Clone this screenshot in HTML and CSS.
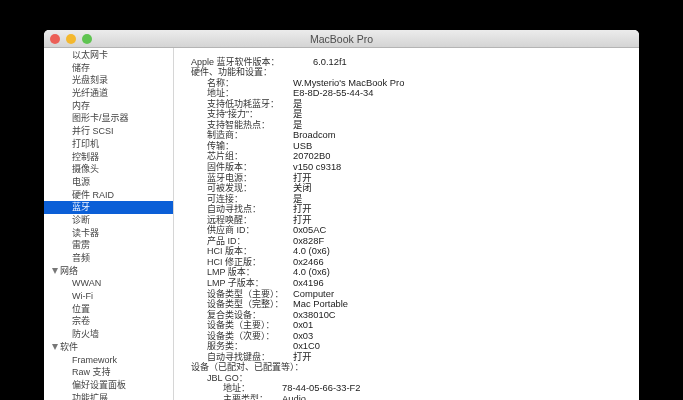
FILE: index.html
```html
<!DOCTYPE html>
<html lang="zh-CN">
  <head>
    <meta charset="UTF-8" />
    <meta name="viewport" content="width=device-width, initial-scale=1.0" />
    <title>MacBook Pro</title>
    <link rel="stylesheet" href="styles.css">
  </head>
  <body>
    <div class="window">
      <div class="titlebar">
        <div class="lights">
          <span class="light red"></span>
          <span class="light yellow"></span>
          <span class="light green"></span>
        </div>
        <div class="title">MacBook Pro</div>
      </div>
      <div class="content">
        <ul class="sidebar">
          <li>以太网卡</li>
          <li>储存</li>
          <li>光盘刻录</li>
          <li>光纤通道</li>
          <li>内存</li>
          <li>图形卡/显示器</li>
          <li>并行 SCSI</li>
          <li>打印机</li>
          <li>控制器</li>
          <li>摄像头</li>
          <li>电源</li>
          <li>硬件 RAID</li>
          <li class="selected">蓝牙</li>
          <li>诊断</li>
          <li>读卡器</li>
          <li>雷雳</li>
          <li>音频</li>
          <li class="group"><span class="arrow"></span>网络</li>
          <li>WWAN</li>
          <li>Wi-Fi</li>
          <li>位置</li>
          <li>宗卷</li>
          <li>防火墙</li>
          <li class="group"><span class="arrow"></span>软件</li>
          <li>Framework</li>
          <li>Raw 支持</li>
          <li>偏好设置面板</li>
          <li>功能扩展</li>
        </ul>
        <div class="details">
          <div class="row top"><span class="key">Apple 蓝牙软件版本：</span><span class="val">6.0.12f1</span></div>
          <div class="row"><span class="key">硬件、功能和设置：</span></div>
          <div class="row sub"><span class="key">名称：</span><span class="val">W.Mysterio's MacBook Pro</span></div>
          <div class="row sub"><span class="key">地址：</span><span class="val">E8-8D-28-55-44-34</span></div>
          <div class="row sub"><span class="key">支持低功耗蓝牙：</span><span class="val">是</span></div>
          <div class="row sub"><span class="key">支持“接力”：</span><span class="val">是</span></div>
          <div class="row sub"><span class="key">支持智能热点：</span><span class="val">是</span></div>
          <div class="row sub"><span class="key">制造商：</span><span class="val">Broadcom</span></div>
          <div class="row sub"><span class="key">传输：</span><span class="val">USB</span></div>
          <div class="row sub"><span class="key">芯片组：</span><span class="val">20702B0</span></div>
          <div class="row sub"><span class="key">固件版本：</span><span class="val">v150 c9318</span></div>
          <div class="row sub"><span class="key">蓝牙电源：</span><span class="val">打开</span></div>
          <div class="row sub"><span class="key">可被发现：</span><span class="val">关闭</span></div>
          <div class="row sub"><span class="key">可连接：</span><span class="val">是</span></div>
          <div class="row sub"><span class="key">自动寻找点：</span><span class="val">打开</span></div>
          <div class="row sub"><span class="key">远程唤醒：</span><span class="val">打开</span></div>
          <div class="row sub"><span class="key">供应商 ID：</span><span class="val">0x05AC</span></div>
          <div class="row sub"><span class="key">产品 ID：</span><span class="val">0x828F</span></div>
          <div class="row sub"><span class="key">HCI 版本：</span><span class="val">4.0 (0x6)</span></div>
          <div class="row sub"><span class="key">HCI 修正版：</span><span class="val">0x2466</span></div>
          <div class="row sub"><span class="key">LMP 版本：</span><span class="val">4.0 (0x6)</span></div>
          <div class="row sub"><span class="key">LMP 子版本：</span><span class="val">0x4196</span></div>
          <div class="row sub"><span class="key">设备类型（主要）：</span><span class="val">Computer</span></div>
          <div class="row sub"><span class="key">设备类型（完整）：</span><span class="val">Mac Portable</span></div>
          <div class="row sub"><span class="key">复合类设备：</span><span class="val">0x38010C</span></div>
          <div class="row sub"><span class="key">设备类（主要）：</span><span class="val">0x01</span></div>
          <div class="row sub"><span class="key">设备类（次要）：</span><span class="val">0x03</span></div>
          <div class="row sub"><span class="key">服务类：</span><span class="val">0x1C0</span></div>
          <div class="row sub"><span class="key">自动寻找键盘：</span><span class="val">打开</span></div>
          <div class="row"><span class="key">设备（已配对、已配置等）：</span></div>
          <div class="row sub"><span class="key">JBL GO：</span></div>
          <div class="row device"><span class="key">地址：</span><span class="val">78-44-05-66-33-F2</span></div>
          <div class="row device"><span class="key">主要类型：</span><span class="val">Audio</span></div>
        </div>
      </div>
    </div>
  </body>
</html>
```

FILE: styles.css
```css
html,
body {
  height: 100%;
  margin: 0;
  overflow: hidden;
}

body {
  background-color: #000;
  padding: 30px 0 0 44px;
  box-sizing: border-box;
  font-family: "Liberation Sans", "Noto Sans CJK SC", sans-serif;
  font-size: 9px;
  color: #222;
}

.window {
  width: 595px;
  height: 370px;
  background-color: #fff;
  border-radius: 5px 5px 0 0;
  overflow: hidden;
  filter: blur(0.3px);
}

.titlebar {
  display: flex;
  align-items: center;
  justify-content: center;
  position: relative;
  height: 17px;
  background: linear-gradient(#ececec, #d4d4d4);
  border-bottom: 1px solid #b4b4b4;
}

.lights {
  position: absolute;
  top: 4px;
  left: 6px;
  display: flex;
  gap: 6px;
}

.light {
  width: 10px;
  height: 10px;
  border-radius: 50%;
}

.red {
  background-color: #ec5f57;
}

.yellow {
  background-color: #f4b82e;
}

.green {
  background-color: #5fc451;
}

.title {
  font-size: 10.5px;
  color: #4c4c4c;
}

.content {
  display: flex;
  height: 352px;
}

.sidebar {
  width: 129px;
  margin: 0;
  padding: 1px 0 0;
  list-style: none;
  border-right: 1px solid #d6d6d6;
  color: #444;
}

.sidebar li {
  height: 12.7px;
  line-height: 12.7px;
  padding-left: 28px;
  white-space: nowrap;
}

.sidebar .selected {
  background-color: #0b5fd7;
  color: #f2f6ff;
}

.sidebar .group {
  display: flex;
  align-items: center;
  padding-left: 8px;
}

.arrow {
  width: 0;
  height: 0;
  margin-right: 2px;
  border-left: 3px solid transparent;
  border-right: 3px solid transparent;
  border-top: 6px solid #777;
}

.details {
  flex: 1;
  padding: 8.5px 0 0 17px;
}

.row {
  display: flex;
  height: 10.56px;
  line-height: 10.56px;
  white-space: nowrap;
}

.key {
  color: #333;
}

.val {
  font-size: 9.35px;
}

.top .key {
  width: 122px;
}

.sub {
  padding-left: 16px;
}

.sub .key {
  width: 86px;
}

.device {
  padding-left: 32px;
}

.device .key {
  width: 59px;
}
```
